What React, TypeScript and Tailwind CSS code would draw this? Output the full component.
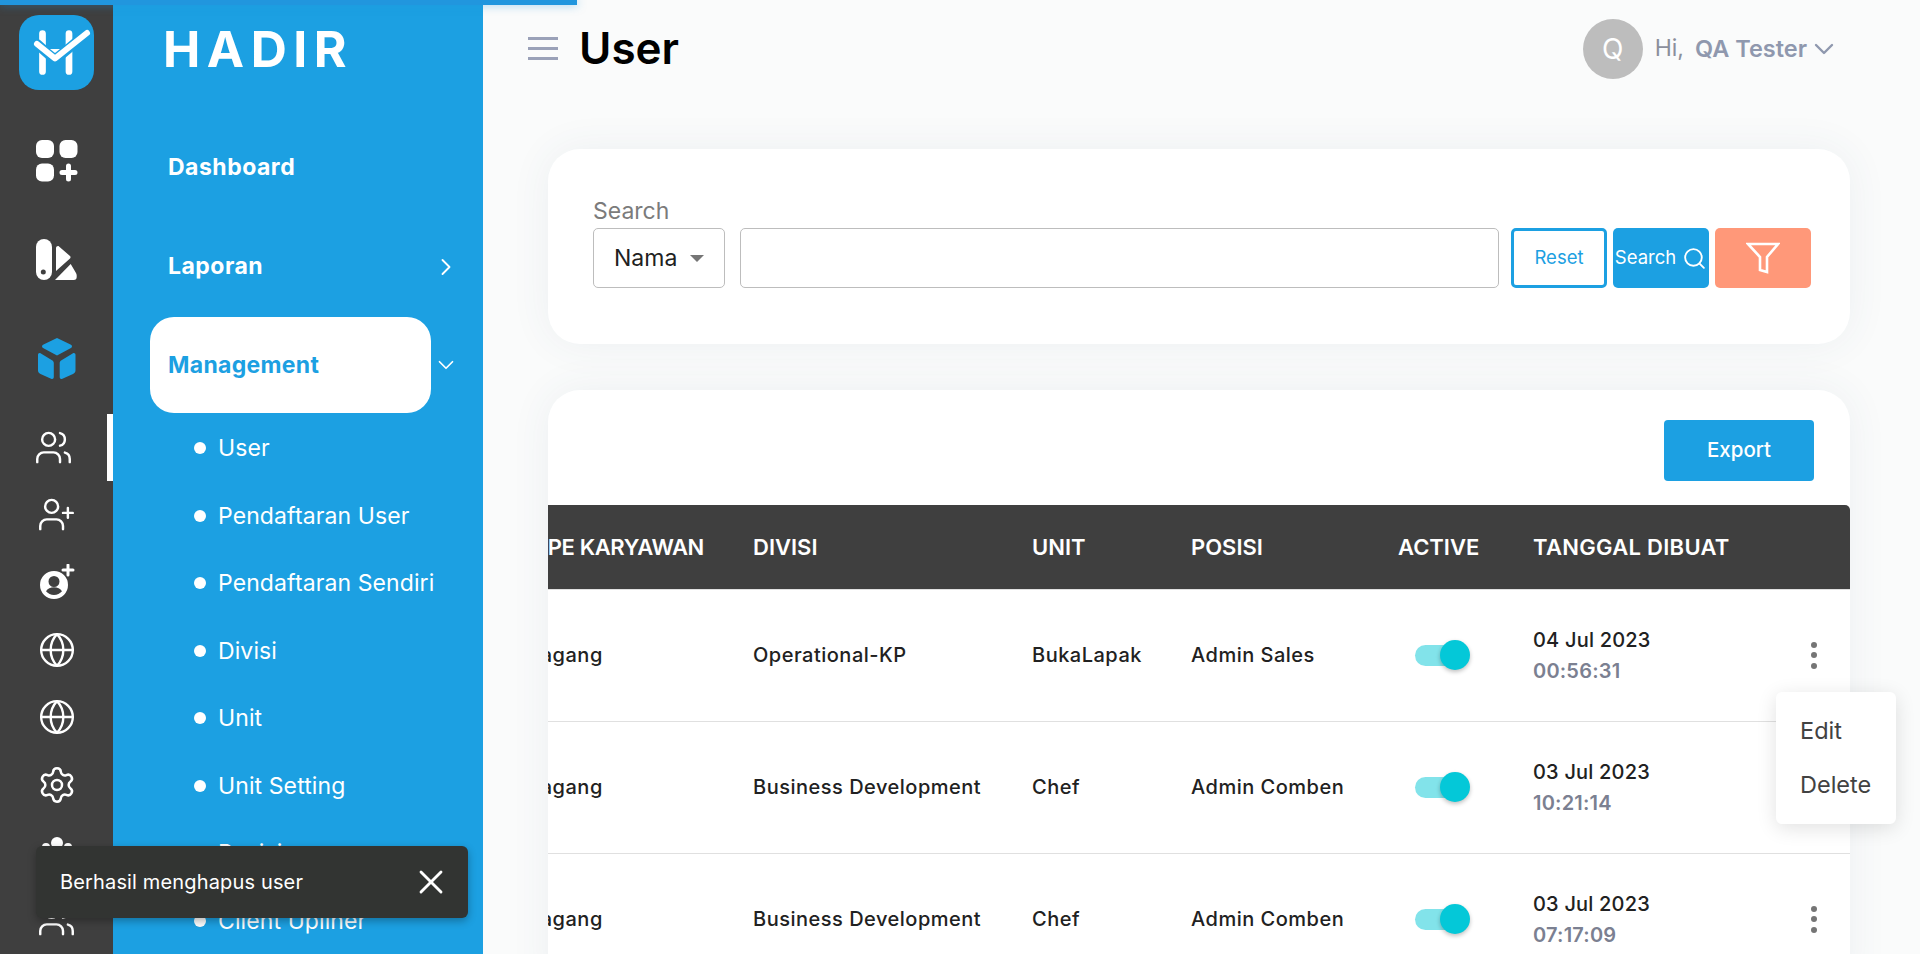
import { ChevronDown, ChevronRight, Globe, Search, Settings, UserPlus, Users, X } from 'lucide-react'

const subMenu = ['User', 'Pendaftaran User', 'Pendaftaran Sendiri', 'Divisi', 'Unit', 'Unit Setting', 'Posisi', 'Client Upliner']

const rows = [
  { divisi: 'Operational-KP', unit: 'BukaLapak', posisi: 'Admin Sales', date: '04 Jul 2023', time: '00:56:31' },
  { divisi: 'Business Development', unit: 'Chef', posisi: 'Admin Comben', date: '03 Jul 2023', time: '10:21:14' },
  { divisi: 'Business Development', unit: 'Chef', posisi: 'Admin Comben', date: '03 Jul 2023', time: '07:17:09' },
]

function LogoMark() {
  return (
    <div className="h-[75px] w-[75px] rounded-[20px] bg-[#1ca0e2]">
      <svg width="75" height="75" viewBox="0 0 75 75" fill="none" strokeLinecap="round" strokeLinejoin="round">
        <path d="M23.500 18.500v38M50 18.500v38" stroke="#fff" strokeWidth="6.700" />
        <path d="M18 29l18 16L68 18" stroke="#1ca0e2" strokeWidth="10" />
        <path d="M31 34h10l-5 4z" fill="#fff" />
        <path d="M18 29l18 14.500L68 18" stroke="#fff" strokeWidth="6" />
      </svg>
    </div>
  )
}

function GridPlusIcon() {
  return (
    <svg width="42" height="42" viewBox="0 0 42 42" fill="#fff">
      <rect x="0" y="0" width="18" height="18" rx="6" />
      <rect x="23.500" y="0" width="18" height="18" rx="6" />
      <rect x="0" y="23.500" width="18" height="18" rx="6" />
      <path d="M32.500 26v13M26 32.500h13" stroke="#fff" strokeWidth="5" strokeLinecap="round" />
    </svg>
  )
}

function SwatchIcon() {
  return (
    <svg width="42" height="42" viewBox="0 0 42 42" fill="#fff">
      <path d="M8 0a8 8 0 0 1 8 8v25a8 8 0 0 1-16 0V8a8 8 0 0 1 8-8z" />
      <circle cx="7.300" cy="33" r="2.500" fill="#3f3f3f" />
      <path d="M20 9c0-1.500 2-2.500 3-1.500L34 17c.7.8.7 1.700 0 2.500L20 32z" />
      <path d="M19 41L34.700 25l5 8.500c.7 1 1 2 1 3V38a3 3 0 0 1-3 3z" />
    </svg>
  )
}

function BoxIcon() {
  return (
    <svg width="38" height="42" viewBox="0 0 38 42" fill="#1ca0e2">
      <path d="M19 0l13.500 6.500c2 1 2 2.800 0 3.800L19 17.600 5.500 10.300c-2-1-2-2.800 0-3.800z" />
      <path d="M0 17c0-1.500 1.200-2.300 2.500-1.700l11.500 7c1.200.7 1.800 1.500 1.800 2.800V39c0 1.600-1.200 2.400-2.700 1.700L2.500 36C.9 35.200 0 34 0 32.500z" />
      <path d="M37.500 17c0-1.500-1.200-2.300-2.500-1.700l-11.500 7c-1.200.7-1.800 1.500-1.800 2.800V39c0 1.600 1.200 2.400 2.700 1.700L35 36c1.600-.8 2.500-2 2.500-3.500z" />
    </svg>
  )
}

function UserCirclePlusIcon() {
  return (
    <svg width="36" height="36" viewBox="0 0 36 36" fill="#fff">
      <path d="M15 7a14 14 0 1 0 14 14 14 14 0 0 0-14-14zm0 5a5.500 5.500 0 1 1-5.500 5.500A5.500 5.500 0 0 1 15 12zm0 19a10.500 10.500 0 0 1-8-3.700c1.500-2.600 4.600-4 8-4s6.500 1.400 8 4a10.500 10.500 0 0 1-8 3.700z" fillRule="evenodd" />
      <path d="M29 1v10M24 6h10" stroke="#fff" strokeWidth="3" strokeLinecap="round" />
    </svg>
  )
}

function ClusterIcon() {
  return (
    <svg width="36" height="36" viewBox="0 0 36 36" fill="#fff">
      <circle cx="18" cy="9" r="6" />
      <circle cx="7" cy="13" r="4" />
      <circle cx="29" cy="13" r="4" />
      <path d="M8 30c0-7 4-12 10-12s10 5 10 12z" />
    </svg>
  )
}

function IconRail() {
  const rowClass = 'flex h-[67.500px] w-full items-center justify-center'
  return (
    <aside className="flex h-full w-[113px] shrink-0 flex-col items-center overflow-hidden bg-[#3f3f3f] pt-[15px]">
      <LogoMark />
      <div className="mt-[21.500px] flex h-[99px] w-full items-center justify-center"><GridPlusIcon /></div>
      <div className="flex h-[99px] w-full items-center justify-center"><SwatchIcon /></div>
      <div className="flex h-[99px] w-full items-center justify-center"><BoxIcon /></div>
      <div className={`${rowClass} mt-[5px] border-r-[6px] border-white`}><Users size={39} strokeWidth={1.5} color="#fff" /></div>
      <div className={rowClass}><UserPlus size={39} strokeWidth={1.5} color="#fff" /></div>
      <div className={rowClass}><UserCirclePlusIcon /></div>
      <div className={rowClass}><Globe size={38} strokeWidth={1.5} color="#fff" /></div>
      <div className={rowClass}><Globe size={38} strokeWidth={1.5} color="#fff" /></div>
      <div className={rowClass}><Settings size={40} strokeWidth={1.5} color="#fff" /></div>
      <div className={rowClass}><ClusterIcon /></div>
      <div className={rowClass}><Users size={39} strokeWidth={1.5} color="#fff" /></div>
    </aside>
  )
}

function Sidebar() {
  return (
    <aside className="flex h-full w-[370px] shrink-0 flex-col overflow-hidden bg-[#1ca0e2] text-white">
      <div className="flex h-[117.500px] shrink-0 items-start pl-[50px] pt-[18px] text-[50px] font-bold leading-[62px] tracking-[0.13em]">HADIR</div>
      <div className="flex h-[99px] shrink-0 items-center pl-[55px] pt-[1px] text-[23px] font-bold tracking-[0.5px]">Dashboard</div>
      <div className="flex h-[99px] shrink-0 items-center justify-between pl-[55px] pr-[23px] pt-[1px] text-[23px] font-bold tracking-[0.5px]">
        Laporan
        <ChevronRight size={28} strokeWidth={1.6} />
      </div>
      <div className="flex h-[99px] shrink-0 items-center pl-[37px] pr-[24px]">
        <div className="flex h-[96px] w-[281px] items-center rounded-[24px] bg-white pl-[18px] pt-[1px] text-[23px] font-bold tracking-[0.3px] text-[#1ca0e2]">Management</div>
        <ChevronDown size={26} strokeWidth={1.6} className="ml-auto" />
      </div>
      {subMenu.map((item) => (
        <div key={item} className="flex h-[67.500px] shrink-0 items-center gap-[12px] pl-[81px] text-[23px] tracking-[0.1px]">
          <span className="h-[12px] w-[12px] rounded-full bg-white" />
          {item}
        </div>
      ))}
    </aside>
  )
}

function Toggle() {
  return (
    <div className="relative h-[21px] w-[50px] rounded-full bg-[#82e3ea]">
      <span className="absolute right-[-5px] top-[-5px] h-[30px] w-[30px] rounded-full bg-[#04c8d8] shadow-[0_2px_4px_rgba(0,0,0,0.25)]" />
    </div>
  )
}

function RowDots() {
  return (
    <div className="flex w-[6px] shrink-0 flex-col gap-[4.500px]">
      <span className="h-[6px] w-[6px] rounded-full bg-[#757575]" />
      <span className="h-[6px] w-[6px] rounded-full bg-[#757575]" />
      <span className="h-[6px] w-[6px] rounded-full bg-[#757575]" />
    </div>
  )
}

function UserTable() {
  const grid = 'grid grid-cols-[225px_279px_159px_207px_135px_317px]'
  return (
    <div className="overflow-hidden">
      <div className="-ml-[20px] w-[1322px]">
        <div className={`${grid} h-[85px] items-center rounded-tr-[5px] border-b border-[#e0e0e0] bg-[#3f3f3f] text-[22px] font-semibold text-white`}>
          <div className="whitespace-nowrap tracking-[-0.4px]">TIPE KARYAWAN</div>
          <div>DIVISI</div>
          <div>UNIT</div>
          <div>POSISI</div>
          <div>ACTIVE</div>
          <div className="tracking-[0.3px]">TANGGAL DIBUAT</div>
        </div>
        {rows.map((row, i) => (
          <div key={i} className={`${grid} h-[132px] items-center border-b border-[#e0e0e0] pb-[1px] text-[20px] font-medium tracking-[0.5px] text-[#212121]`}>
            <div className="-ml-[6px]">Magang</div>
            <div>{row.divisi}</div>
            <div>{row.unit}</div>
            <div>{row.posisi}</div>
            <div className="pl-[17px]"><Toggle /></div>
            <div className="flex items-center">
              <div className="w-[278px] shrink-0">
                <div className="leading-[26px] tracking-[0.2px]">{row.date}</div>
                <div className="mt-[5px] font-semibold leading-[26px] tracking-[0.2px] text-[#7b8091]">{row.time}</div>
              </div>
              <RowDots />
            </div>
          </div>
        ))}
      </div>
    </div>
  )
}

export default function App() {
  return (
    <div className="relative flex h-[954px] w-full overflow-hidden bg-[#fafbfb] font-['Inter',sans-serif]">
      <div className="absolute left-0 top-0 z-20 h-[5px] w-[577px] bg-[#2196de] shadow-[0_0_10px_rgba(33,150,222,0.5)]" />
      <IconRail />
      <Sidebar />

      <main className="min-w-0 flex-1 pl-[45px] pr-[70px]">
        <header className="flex h-[97px] items-center justify-between pr-[10px]">
          <div className="flex items-center gap-[21px]">
            <div className="flex w-[30px] flex-col gap-[7px]">
              <span className="h-[3px] bg-[#9aa1b8]" />
              <span className="h-[3px] bg-[#9aa1b8]" />
              <span className="h-[3px] bg-[#9aa1b8]" />
            </div>
            <h1 className="-mt-[2px] text-[44px] font-semibold leading-none text-black">User</h1>
          </div>
          <div className="flex items-center">
            <div className="flex h-[60px] w-[60px] items-center justify-center rounded-full bg-[#bdbdbd] text-[28px] text-white">Q</div>
            <span className="ml-[12px] text-[23px] text-[#8b8f9c]">Hi,</span>
            <span className="ml-[11px] text-[23.500px] font-semibold text-[#8f98ae]">QA Tester</span>
            <ChevronDown size={32} strokeWidth={1.800} color="#8f98ae" className="ml-[1px]" />
          </div>
        </header>

        <div className="ml-[20px] mt-[52px] h-[195px] rounded-[32px] bg-white pl-[45px] pr-[39px] pt-[46px] shadow-[0_0_40px_rgba(60,80,110,0.07)]">
          <div className="h-[33px] text-[23px] leading-[32px] text-[#7b7b7b]">Search</div>
          <div className="flex h-[60px] items-stretch">
            <div className="flex w-[132px] items-center justify-between rounded-[5px] border border-[#bdbdbd] pl-[20px] pr-[20px] text-[23px] text-[#212121]">
              Nama
              <span className="h-0 w-0 border-x-[7px] border-t-[7px] border-x-transparent border-t-[#757575]" />
            </div>
            <input className="ml-[15px] w-[759px] rounded-[5px] border border-[#bdbdbd] bg-white" />
            <button type="button" className="ml-[12px] w-[96px] rounded-[5px] border-[3px] border-[#1ca0e2] text-[18.500px] text-[#1ca0e2]">Reset</button>
            <button type="button" className="ml-[6px] flex w-[96px] items-center justify-center gap-[6px] rounded-[5px] bg-[#1ca0e2] text-[18.500px] text-white">
              Search
              <Search size={25} strokeWidth={1.800} />
            </button>
            <button type="button" className="ml-[6px] flex w-[96px] items-center justify-center rounded-[5px] bg-[#ff9879]">
              <svg width="34" height="32" viewBox="0 0 34 32" fill="none" stroke="#fff" strokeWidth="2.600">
                <path d="M2 2h30L21 15v15l-7-2V15z" />
              </svg>
            </button>
          </div>
        </div>

        <div className="ml-[20px] mt-[46px] h-[600px] overflow-hidden rounded-t-[32px] bg-white shadow-[0_0_40px_rgba(60,80,110,0.07)]">
          <div className="flex h-[115px] items-start justify-end pr-[36px] pt-[30px]">
            <button type="button" className="h-[61px] w-[150px] rounded-[4px] bg-[#1ca0e2] text-[20.500px] font-medium text-white">Export</button>
          </div>
          <UserTable />
        </div>
      </main>

      <div className="absolute left-[1776px] top-[692px] z-10 flex h-[132px] w-[120px] flex-col gap-[24px] rounded-[6px] bg-white pl-[24px] pt-[24px] text-[23.500px] leading-[30px] text-[#424242] shadow-[0_4px_20px_rgba(0,0,0,0.12)]">
        <div>Edit</div>
        <div>Delete</div>
      </div>

      <div className="absolute left-[36px] top-[846px] z-10 flex h-[72px] w-[432px] items-center justify-between rounded-[6px] bg-[#323432] pl-[24px] pr-[17px] text-[20px] tracking-[0.15px] text-white shadow-[0_3px_8px_rgba(0,0,0,0.3)]">
        Berhasil menghapus user
        <X size={40} strokeWidth={1.700} />
      </div>
    </div>
  )
}
